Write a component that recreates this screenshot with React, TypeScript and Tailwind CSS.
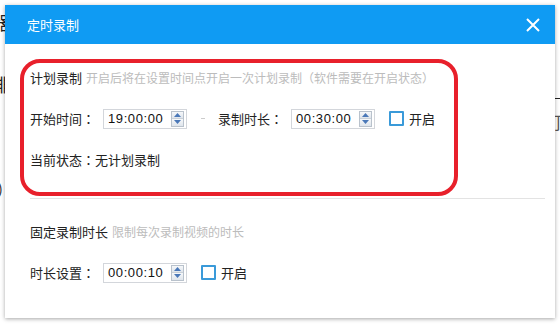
import React from "react";

const cjk = { fontFamily: '"Microsoft YaHei", "Noto Sans CJK SC", sans-serif' };
const num = { fontFamily: '"Liberation Sans", Arial, sans-serif' };
const jp = { fontFamily: '"Noto Sans CJK JP", sans-serif' };

function Spinner() {
  return (
    <div className="flex h-[16px] w-[13px] flex-col border border-[#b9c2cc]">
      <div className="flex flex-1 items-center justify-center border-b border-[#c9d0d8] bg-gradient-to-b from-[#f6f8fa] to-[#dfe5ec]">
        <svg width="7" height="4" viewBox="0 0 7 4">
          <path d="M3.5 0 L7 4 L0 4 Z" fill="#4a78b8" />
        </svg>
      </div>
      <div className="flex flex-1 items-center justify-center bg-gradient-to-b from-[#f6f8fa] to-[#dfe5ec]">
        <svg width="7" height="4" viewBox="0 0 7 4">
          <path d="M0 0 L7 0 L3.5 4 Z" fill="#4a78b8" />
        </svg>
      </div>
    </div>
  );
}

function TimeInput({ value }: { value: string }) {
  return (
    <div className="flex h-[20px] w-[84px] shrink-0 items-center justify-between border border-[#d3d6db] bg-white pl-[4px] pr-[2px]">
      <span className="text-[13px] tracking-[0.6px] text-[#111]" style={num}>
        {value}
      </span>
      <Spinner />
    </div>
  );
}

function Toggle() {
  return (
    <div className="ml-[14px] flex items-center gap-[5px]">
      <div className="h-[15px] w-[15px] shrink-0 rounded-[1px] border-2 border-[#3a9ad9] bg-white" />
      <span className="text-[13px] text-[#222]">开启</span>
    </div>
  );
}

function Colon() {
  return <span style={jp}>：</span>;
}

function Label({ children }: { children: React.ReactNode }) {
  return (
    <div className="w-[73px] shrink-0 text-[13px] text-[#222]">
      {children}
      <Colon />
    </div>
  );
}

export default function App() {
  return (
    <div className="relative h-[325px] w-[560px] overflow-hidden bg-white" style={cjk}>
      {/* background window peeking out */}
      <span className="absolute left-[-9px] top-[9px] text-[18px] text-[#222]">器</span>
      <span className="absolute left-[-9px] top-[71px] text-[18px] text-[#222]">排</span>
      <span className="absolute left-[-2px] top-[178px] text-[14px] text-[#222]">)</span>
      <span className="absolute left-[553px] top-[98px] h-px w-[7px] bg-[#222]" />
      <span className="absolute left-[554px] top-[109px] text-[18px] text-[#555]">顶</span>

      <div className="absolute left-[5px] top-[5px] flex h-[313px] w-[550px] flex-col bg-white shadow-[0_1px_4px_rgba(0,0,0,0.35)]">
        <div className="flex h-[39px] shrink-0 items-center justify-between bg-[#0f9bf3] pl-[22px] pr-[15px]">
          <span className="text-[13px] text-white">定时录制</span>
          <svg width="14" height="14" viewBox="0 0 14 14">
            <path d="M1 1 L13 13 M13 1 L1 13" stroke="white" strokeWidth="2" />
          </svg>
        </div>

        <div className="flex flex-col pl-[25px] pr-[10px]">
          <div className="flex h-[154px] flex-col pt-[24px]">
            <div className="flex items-center gap-[4px] text-[12px]">
              <span className="text-[13px] text-[#222]">计划录制</span>
              <span className="text-[#bcbcbc]">
                开启后将在设置时间点开启一次计划录制<span style={jp}>（</span>软件需要在开启状态<span style={jp}>）</span>
              </span>
            </div>
            <div className="mt-[21px] flex items-center">
              <Label>开始时间</Label>
              <TimeInput value="19:00:00" />
              <div className="ml-[14px] mr-[13px] h-px w-[4px] bg-[#ccc]" />
              <Label>录制时长</Label>
              <TimeInput value="00:30:00" />
              <Toggle />
            </div>
            <div className="mt-[21px] text-[13px] text-[#222]">
              当前状态<Colon />无计划录制
            </div>
          </div>

          <div className="h-px w-full bg-[#e3e3e3]" />

          <div className="flex flex-col pt-[23px]">
            <div className="flex items-center gap-[4px] text-[12px]">
              <span className="text-[13px] text-[#222]">固定录制时长</span>
              <span className="text-[#bcbcbc]">限制每次录制视频的时长</span>
            </div>
            <div className="mt-[21px] flex items-center">
              <Label>时长设置</Label>
              <TimeInput value="00:00:10" />
              <Toggle />
            </div>
          </div>
        </div>
      </div>

      {/* red annotation */}
      <div className="absolute left-[20px] top-[59px] h-[137px] w-[438px] rounded-[20px] border-[4px] border-[#e8202b]" />
    </div>
  );
}
